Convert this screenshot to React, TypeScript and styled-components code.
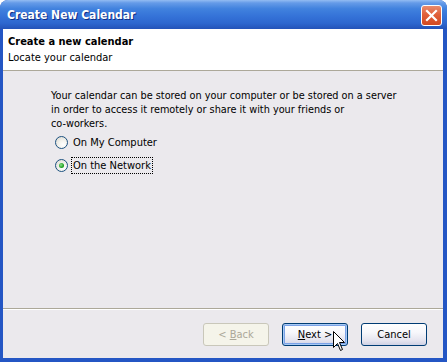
import React from "react";
import styled, { createGlobalStyle } from "styled-components";

const GlobalStyle = createGlobalStyle`
  html, body { margin: 0; padding: 0; background: #ffffff; }
  body {
    font-family: "DejaVu Sans Condensed", "DejaVu Sans", "Liberation Sans", sans-serif;
    font-stretch: condensed;
    font-size: 11px;
    color: #000;
  }
  * { box-sizing: border-box; }
`;

const Window = styled.div`
  position: relative;
  width: 447px;
  height: 362px;
  display: flex;
  flex-direction: column;
  background: #2456c4;
  border-radius: 8px 8px 0 0;
  overflow: hidden;
  padding: 0 4px 4px 3px;
`;

const TitleBar = styled.div`
  height: 29px;
  margin: 0 -4px 0 -3px;
  padding: 0 5px 0 7px;
  display: flex;
  align-items: center;
  justify-content: space-between;
  background: linear-gradient(
    180deg,
    #93bcf2 0%,
    #659be8 10%,
    #4182de 30%,
    #3573d8 55%,
    #2d67cf 80%,
    #2353b8 100%
  );
`;

const Title = styled.span`
  color: #fff;
  font-weight: bold;
  font-size: 12px;
  text-shadow: 1px 1px 0 #0f2f86;
`;

const CloseButton = styled.div`
  width: 21px;
  height: 21px;
  border: 1px solid #fff;
  border-radius: 3px;
  background: linear-gradient(180deg, #e98c6e 0%, #e0603a 45%, #d24a22 100%);
  display: flex;
  align-items: center;
  justify-content: center;
  margin-top: 1px;
`;

const Header = styled.div`
  background: #fff;
  height: 42px;
  padding: 5px 0 0 5px;
  display: flex;
  flex-direction: column;
  border-bottom: 1px solid #aca899;
`;

const HeaderTitle = styled.div`
  font-weight: bold;
  font-size: 11px;
  line-height: 16px;
`;

const HeaderSub = styled.div`
  font-size: 11px;
  line-height: 16px;
`;

const Body = styled.div`
  flex: 1;
  background: #ebe9ed;
  display: flex;
  flex-direction: column;
`;

const Content = styled.div`
  flex: 1;
  padding: 18px 10px 0 48px;
  border-bottom: 1px solid #aca899;
  box-shadow: 0 1px 0 #ffffff;
`;

const Paragraph = styled.p`
  margin: 0;
  line-height: 14px;
  font-size: 10.8px;
  white-space: nowrap;
`;

const RadioRow = styled.label`
  display: flex;
  align-items: center;
  height: 23px;
  margin-left: 4px;
`;

const RadioCircle = styled.span<{ $checked?: boolean }>`
  width: 13px;
  height: 13px;
  border-radius: 50%;
  border: 1px solid #1c5180;
  background: radial-gradient(circle at 65% 70%, #ffffff 0%, #f4f3ee 40%, #d8d6ce 100%);
  display: flex;
  align-items: center;
  justify-content: center;
  margin-right: 5px;
  &::after {
    content: "";
    display: ${(p) => (p.$checked ? "block" : "none")};
    width: 5px;
    height: 5px;
    border-radius: 50%;
    background: radial-gradient(circle at 40% 40%, #8ee08e 0%, #21a121 60%, #1a8a1a 100%);
  }
`;

const RadioText = styled.span<{ $focused?: boolean }>`
  padding: 1px 1px;
  margin-left: -2px;
  border: 1px dotted ${(p) => (p.$focused ? "#000" : "transparent")};
  line-height: 13px;
`;

const Footer = styled.div`
  height: 49px;
  display: flex;
  align-items: center;
  justify-content: flex-end;
  padding: 2px 16px 0 0;
  gap: 13px;
`;

const Button = styled.div<{ $default?: boolean; $disabled?: boolean }>`
  width: 66px;
  height: 23px;
  border-radius: 3px;
  border: 1px solid ${(p) => (p.$disabled ? "#c9c7ba" : "#003c74")};
  background: ${(p) =>
    p.$disabled
      ? "#f5f4ea"
      : "linear-gradient(180deg, #ffffff 0%, #f7f7fb 40%, #e4e3ee 80%, #cfd1e4 100%)"};
  color: ${(p) => (p.$disabled ? "#aca899" : "#000")};
  display: flex;
  align-items: center;
  justify-content: center;
  font-size: 11px;
  white-space: pre;
  box-shadow: ${(p) =>
    p.$default ? "inset 0 0 0 1px #a8caf4, inset 0 0 0 2px #7ba2e7" : "none"};
`;

const Cursor = styled.svg`
  position: absolute;
  left: 333px;
  top: 331px;
  pointer-events: none;
`;

export default function App() {
  return (
    <>
      <GlobalStyle />
      <Window>
        <TitleBar>
          <Title>Create New Calendar</Title>
          <CloseButton>
            <svg width="13" height="13" viewBox="0 0 13 13">
              <path d="M2 2 L11 11 M11 2 L2 11" stroke="#fff" strokeWidth="2.2" strokeLinecap="square" />
            </svg>
          </CloseButton>
        </TitleBar>
        <Header>
          <HeaderTitle>Create a new calendar</HeaderTitle>
          <HeaderSub>Locate your calendar</HeaderSub>
        </Header>
        <Body>
          <Content>
            <Paragraph>
              Your calendar can be stored on your computer or be stored on a server
              <br />
              in order to access it remotely or share it with your friends or
              <br />
              co-workers.
            </Paragraph>
            <RadioRow>
              <RadioCircle />
              <RadioText>On My Computer</RadioText>
            </RadioRow>
            <RadioRow>
              <RadioCircle $checked />
              <RadioText $focused>On the Network</RadioText>
            </RadioRow>
          </Content>
          <Footer>
            <Button $disabled>
              {"< "}
              <u>B</u>
              {"ack"}
            </Button>
            <Button $default>
              <u>N</u>
              {"ext >"}
            </Button>
            <Button>Cancel</Button>
          </Footer>
        </Body>
        <Cursor width="13" height="22" viewBox="0 0 13 22">
          <path
            d="M0.5 0.5 L0.5 16.5 L4.5 12.5 L7.5 19.5 L9.5 18.5 L6.5 11.5 L11.5 11.5 Z"
            fill="#fff"
            stroke="#000"
            strokeWidth="1"
          />
        </Cursor>
      </Window>
    </>
  );
}
